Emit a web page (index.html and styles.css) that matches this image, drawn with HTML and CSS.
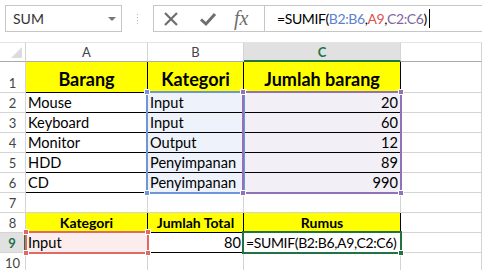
FILE: index.html
```html
<!doctype html>
<html lang="id">
<head>
	<meta charset="UTF-8">
	<title>SUMIF</title>
	<link rel="stylesheet" href="styles.css">
</head>
<body>
	<div class="toolbar">
		<div class="namebox">
			<span>SUM</span>
			<span class="caret"></span>
		</div>
		<div class="grip"></div>
		<div class="fbar">
			<div class="ficons">
				<svg class="ico" width="18" height="18" viewBox="0 0 18 18"><path d="M3 3 L15 15 M15 3 L3 15" stroke="#6e6e6e" stroke-width="2.2" fill="none"/></svg>
				<svg class="ico" width="18" height="18" viewBox="0 0 18 18"><path d="M2 9.5 L7 14 L16 4" stroke="#6e6e6e" stroke-width="3" fill="none"/></svg>
				<span class="fx">fx</span>
			</div>
			<div class="finput">=SUMIF(<span class="c-blue">B2:B6</span>,<span class="c-red">A9</span>,<span class="c-purple">C2:C6</span>)<span class="cursor"></span></div>
		</div>
	</div>

	<div class="sheet">
		<div class="hd corner"></div>
		<div class="hd">A</div>
		<div class="hd">B</div>
		<div class="hd active-col">C</div>
		<div class="hd"></div>

		<div class="rn">1</div>
		<div class="c t title">Barang</div>
		<div class="c t title">Kategori</div>
		<div class="c t title">Jumlah barang</div>
		<div class="c"></div>

		<div class="rn">2</div>
		<div class="c t">Mouse</div>
		<div class="c t blue">Input</div>
		<div class="c t num purple">20</div>
		<div class="c"></div>

		<div class="rn">3</div>
		<div class="c t">Keyboard</div>
		<div class="c t blue">Input</div>
		<div class="c t num purple">60</div>
		<div class="c"></div>

		<div class="rn">4</div>
		<div class="c t">Monitor</div>
		<div class="c t blue">Output</div>
		<div class="c t num purple">12</div>
		<div class="c"></div>

		<div class="rn">5</div>
		<div class="c t">HDD</div>
		<div class="c t blue">Penyimpanan</div>
		<div class="c t num purple">89</div>
		<div class="c"></div>

		<div class="rn">6</div>
		<div class="c t">CD</div>
		<div class="c t blue">Penyimpanan</div>
		<div class="c t num purple">990</div>
		<div class="c"></div>

		<div class="rn">7</div>
		<div class="c"></div>
		<div class="c"></div>
		<div class="c"></div>
		<div class="c"></div>

		<div class="rn">8</div>
		<div class="c t sub">Kategori</div>
		<div class="c t sub">Jumlah Total</div>
		<div class="c t sub">Rumus</div>
		<div class="c"></div>

		<div class="rn active-row">9</div>
		<div class="c t red">Input</div>
		<div class="c t num">80</div>
		<div class="c t formula">=SUMIF(B2:B6,A9,C2:C6)</div>
		<div class="c"></div>

		<div class="rn">10</div>
		<div class="c"></div>
		<div class="c"></div>
		<div class="c"></div>
		<div class="c"></div>

		<span class="range r-blue"><i class="h tl"></i><i class="h bl"></i><i class="h tr"></i><i class="h br"></i></span>
		<span class="range r-purple"><i class="h tl"></i><i class="h bl"></i><i class="h tr"></i><i class="h br"></i></span>
		<span class="range r-red"><i class="h tl"></i><i class="h bl"></i><i class="h tr"></i><i class="h br"></i></span>
		<span class="range r-green"><i class="h br"></i></span>
	</div>
</body>
</html>
```

FILE: styles.css
```css
*{
	padding:0;
	margin:0;
	box-sizing:border-box;
}
body{
	width:482px;
	height:270px;
	overflow:hidden;
	background:#fff;
	font-family:Lato,'Open Sans',sans-serif;
	color:#000;
}

/* formula bar */
.toolbar{
	height:42px;
	display:flex;
	align-items:flex-start;
	padding:5px 0 0 5px;
}
.namebox{
	width:117px;
	height:27px;
	border:1px solid #c6c6c6;
	display:flex;
	align-items:center;
	justify-content:space-between;
	padding:0 5px 0 7px;
	font-size:14px;
	color:#333;
}
.caret{
	width:0;
	height:0;
	border-left:4px solid transparent;
	border-right:4px solid transparent;
	border-top:4px solid #777;
}
.grip{
	width:3px;
	height:12px;
	margin:8px 14px 0 14px;
	background:radial-gradient(circle,#b5b5b5 0.8px,transparent 1px) 0 0/3px 3px;
}
.fbar{
	flex:1;
	height:27px;
	border:1px solid #c6c6c6;
	border-right:none;
	display:flex;
}
.ficons{
	width:111px;
	display:flex;
	align-items:center;
	padding-left:8px;
	gap:19px;
	border-right:1px solid #c6c6c6;
}
.fx{
	font-family:'Liberation Serif',serif;
	font-style:italic;
	font-size:20px;
	color:#6e6e6e;
	margin-left:-2px;
}
.finput{
	flex:1;
	display:flex;
	align-items:center;
	padding-left:12px;
	font-size:14px;
	letter-spacing:-0.4px;
	white-space:pre;
}
.c-blue{ color:#5b82cf; }
.c-red{ color:#d9534f; }
.c-purple{ color:#8064a2; }
.cursor{
	width:1px;
	height:19px;
	background:#000;
	margin-left:2px;
}

/* sheet grid */
.sheet{
	position:relative;
	display:grid;
	grid-template-columns:26px 122px 96px 157px 1fr;
	grid-template-rows:20px 31px repeat(9,20px);
	font-size:14.6px;
}
.hd,.rn,.c{
	border-right:1px solid #d4d4d4;
	border-bottom:1px solid #d4d4d4;
	white-space:nowrap;
	overflow:hidden;
}
.hd{
	border-bottom-color:#ababab;
	font-size:13px;
	color:#444;
	display:flex;
	align-items:center;
	justify-content:center;
	border-top:1px solid #e4e4e4;
}
.corner{
	position:relative;
}
.corner:after{
	content:'';
	position:absolute;
	right:3px;
	bottom:3px;
	width:0;
	height:0;
	border-left:11px solid transparent;
	border-bottom:11px solid #dcdcdc;
}
.hd.active-col{
	background:#e1e1e1;
	color:#217346;
	font-weight:bold;
	border-bottom:2px solid #217346;
}
.rn{
	font-size:13px;
	color:#444;
	display:flex;
	align-items:flex-end;
	justify-content:center;
	padding-bottom:1px;
}
.rn.active-row{
	background:#e1e1e1;
	color:#217346;
	font-weight:bold;
	border-right:2px solid #217346;
}
.c{
	display:flex;
	align-items:flex-end;
	padding:0 2px 1px 2px;
}
.c.t{
	border-color:#000;
}
.title{
	background:#ffff00;
	font-weight:bold;
	font-size:18px;
	justify-content:center;
	padding-bottom:2px;
}
.sub{
	background:#ffff00;
	font-weight:bold;
	font-size:14px;
	justify-content:center;
}
.num{
	justify-content:flex-end;
}
.formula{
	font-size:14px;
	letter-spacing:-0.35px;
}
.blue{ background:#eef2fa; }
.purple{ background:#f2eff7; }
.red{ background:#fbeded; }

/* range highlights drawn over the cells */
.range{
	position:absolute;
	border:2px solid currentColor;
	pointer-events:none;
}
.r-blue{
	left:146px; top:49px; width:99px; height:103px;
	color:#7094d8;
}
.r-purple{
	left:242px; top:49px; width:160px; height:103px;
	color:#8f72b8;
}
.r-red{
	left:25px; top:189px; width:124px; height:23px;
	color:#dd6a66;
}
.r-green{
	left:242px; top:189px; width:160px; height:23px;
	color:#217346;
}
.h{
	position:absolute;
	width:6px;
	height:6px;
	background:currentColor;
	border:1px solid #fff;
}
.tl{ left:-4px; top:-4px; }
.tr{ right:-4px; top:-4px; }
.bl{ left:-4px; bottom:-4px; }
.br{ right:-4px; bottom:-4px; }
```
